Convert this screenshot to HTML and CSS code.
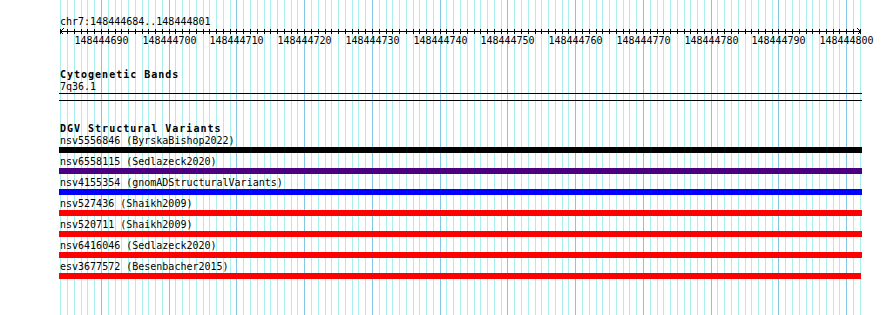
FILE: index.html
```html
<!DOCTYPE html>
<html lang="en">
<head>
    <meta charset="UTF-8" />
    <title>DGV Structural Variants - chr7:148444684-148444801</title>
    <link rel="stylesheet" href="styles.css">
</head>
<body>
    <!-- base-level guidelines, drawn behind the tracks -->
    <svg class="guides" id="guides" width="890" height="315"></svg>

    <div class="tracks">
        <div class="position">chr7:148444684..148444801</div>

        <!-- base position ruler -->
        <svg class="ruler" id="ruler" width="801" height="19">
            <line x1="0" y1="4.5" x2="801" y2="4.5" stroke="#000" />
            <polyline points="3.5,1.5 0.5,4.5 3.5,7.5" fill="none" stroke="#000" />
            <polyline points="797.5,1.5 800.5,4.5 797.5,7.5" fill="none" stroke="#000" />
            <g id="rulerTicks"></g>
            <g id="rulerLabels" class="ruler-labels"></g>
        </svg>

        <!-- Cytogenetic Bands -->
        <div class="track-title cyto-title">Cytogenetic Bands</div>
        <div class="band-name">7q36.1</div>
        <div class="band"></div>

        <!-- DGV Structural Variants -->
        <div class="track-title dgv-title">DGV Structural Variants</div>
        <div class="variant">
            <div class="variant-label">nsv5556846 (ByrskaBishop2022)</div>
            <div class="variant-bar bar-black"></div>
        </div>
        <div class="variant">
            <div class="variant-label">nsv6558115 (Sedlazeck2020)</div>
            <div class="variant-bar bar-purple"></div>
        </div>
        <div class="variant">
            <div class="variant-label">nsv4155354 (gnomADStructuralVariants)</div>
            <div class="variant-bar bar-blue"></div>
        </div>
        <div class="variant">
            <div class="variant-label">nsv527436 (Shaikh2009)</div>
            <div class="variant-bar bar-red"></div>
        </div>
        <div class="variant">
            <div class="variant-label">nsv520711 (Shaikh2009)</div>
            <div class="variant-bar bar-red"></div>
        </div>
        <div class="variant">
            <div class="variant-label">nsv6416046 (Sedlazeck2020)</div>
            <div class="variant-bar bar-red"></div>
        </div>
        <div class="variant">
            <div class="variant-label">esv3677572 (Besenbacher2015)</div>
            <div class="variant-bar bar-red bar-short"></div>
        </div>
    </div>

    <script>
        // window is chr7:148444684..148444801 (118 bases)
        const start = 148444684;
        const bases = 118;
        const x0 = 60.3;
        const step = 6.775;
        const ns = 'http://www.w3.org/2000/svg';

        function baseX(i) {
            return Math.round(x0 + i * step);
        }

        const guides = document.getElementById('guides');
        const ticks = document.getElementById('rulerTicks');
        const labels = document.getElementById('rulerLabels');

        for (let i = 0; i <= bases; i++) {
            const x = baseX(i);
            const pos = start + i;

            // guideline
            const g = document.createElementNS(ns, 'line');
            g.setAttribute('x1', x + 0.5);
            g.setAttribute('x2', x + 0.5);
            g.setAttribute('y1', 0);
            g.setAttribute('y2', 315);
            g.setAttribute('class', pos % 10 === 0 ? 'guide guide-major' : 'guide');
            guides.appendChild(g);

            // ruler tick
            const t = document.createElementNS(ns, 'line');
            t.setAttribute('x1', x - 60 + 0.5);
            t.setAttribute('x2', x - 60 + 0.5);
            t.setAttribute('y1', 2);
            t.setAttribute('y2', 7);
            t.setAttribute('stroke', '#000');
            ticks.appendChild(t);

            // number every 10 bases
            if (pos % 10 === 0) {
                const txt = document.createElementNS(ns, 'text');
                txt.setAttribute('x', x - 60 + 0.5);
                txt.setAttribute('y', 17);
                txt.textContent = pos;
                labels.appendChild(txt);
            }
        }
    </script>
</body>
</html>
```

FILE: styles.css
```css
body {
    margin: 0;
    width: 890px;
    height: 315px;
    overflow: hidden;
    position: relative;
    background-color: #fff;
    color: #000;
    font-family: "DejaVu Sans Mono", "Liberation Mono", monospace;
    font-size: 10px;
}

/* Guidelines behind everything */
.guides {
    position: absolute;
    top: 0;
    left: 0;
    shape-rendering: crispEdges;
}

.guide {
    stroke: #aaeeee;
    stroke-width: 1;
}

.guide-major {
    stroke: #84c6e6;
}

/* Track area */
.tracks {
    position: relative;
    padding-left: 60px;
    width: 801px;
}

.position {
    padding-top: 16px;
    line-height: 11px;
    white-space: nowrap;
}

.ruler {
    display: block;
    overflow: visible;
    shape-rendering: crispEdges;
}

.ruler-labels {
    font-family: "DejaVu Sans Mono", "Liberation Mono", monospace;
    font-size: 10px;
    text-anchor: middle;
    fill: #000;
}

.track-title {
    font-weight: bold;
    letter-spacing: 1px;
    line-height: 11px;
    white-space: nowrap;
}

.cyto-title {
    margin-top: 23px;
}

.band-name {
    margin-top: 1px;
    line-height: 11px;
}

.band {
    margin-top: 1px;
    margin-left: -1px;
    width: 803px;
    height: 6px;
    border-top: 1px solid #000;
    border-bottom: 1px solid #000;
}

.dgv-title {
    margin-top: 22px;
    margin-bottom: -2px;
}

/* Variant rows */
.variant-label {
    padding: 3px 0 1px;
    line-height: 11px;
    white-space: nowrap;
}

.variant-bar {
    margin-left: -1px;
    width: 803px;
    height: 6px;
}

.bar-short {
    width: 802px;
}

.bar-black {
    background-color: #000;
}

.bar-purple {
    background-color: #4b0082;
}

.bar-blue {
    background-color: #0000ff;
}

.bar-red {
    background-color: #ff0000;
}
```
